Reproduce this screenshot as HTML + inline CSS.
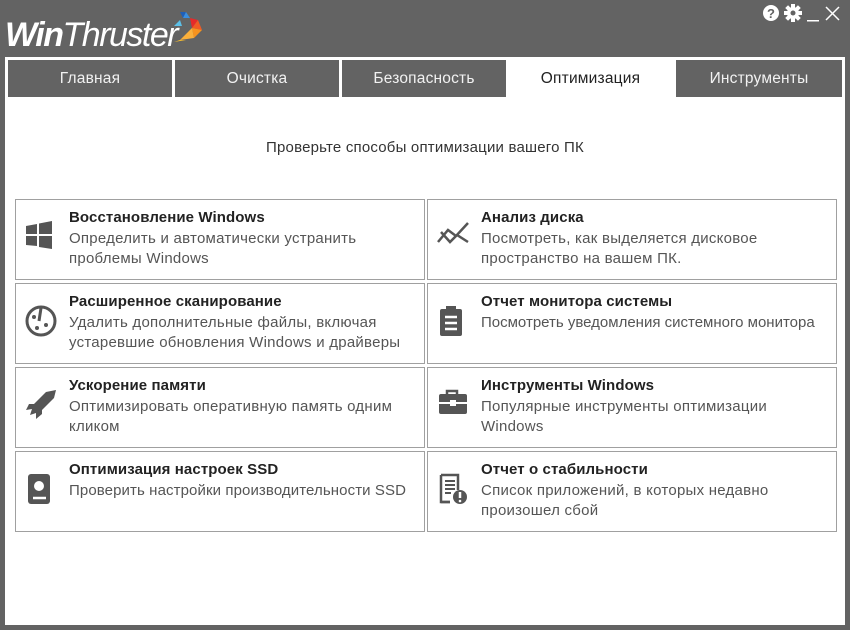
<!DOCTYPE html>
<html><head><meta charset="utf-8"><style>
*{margin:0;padding:0;box-sizing:border-box}
body{width:850px;height:630px;background:#636363;font-family:"Liberation Sans","DejaVu Sans",sans-serif;position:relative;overflow:hidden}
.logo{position:absolute;left:5px;top:16px;color:#fff;font-size:34px;font-style:italic;letter-spacing:-1.5px}
.logo b{font-weight:bold}
.frame{position:absolute;left:5px;top:57px;width:840px;height:568px;background:#fff}
.tab{position:absolute;top:3px;height:37px;background:#636363;color:#f2f2f2;font-size:15.5px;text-align:center;line-height:38px;letter-spacing:0.2px}
.tab.act{background:#fff;color:#222}
.head{position:absolute;top:82px;left:0;width:840px;text-align:center;font-size:15px;color:#333;letter-spacing:0.2px}
.card{position:absolute;width:410px;height:81px;border:1px solid #a0a0a0;background:#fff}
.card .t{position:absolute;left:53px;top:9px;font-size:15px;font-weight:bold;color:#222;letter-spacing:0.1px;white-space:nowrap}
.card .d{position:absolute;left:53px;top:29px;font-size:15px;color:#555;line-height:20px;letter-spacing:0.25px;white-space:nowrap}
.card svg{position:absolute;left:8px;top:20px}
.ctl{position:absolute;top:3px;color:#fff}
</style></head><body>
<div class="logo"><b>Win</b>Thruster</div>
<svg style="position:absolute;left:170px;top:10px" width="36" height="40" viewBox="0 0 36 40">
<polygon points="10,2 16,2 13,8" fill="#1f5fb8"/><polygon points="16,2 20,8 13,8" fill="#3a8ee0"/>
<polygon points="4,16 10,10 12,16" fill="#5cc0e8"/><polygon points="20,8 28,10 22,18" fill="#e52a2a"/>
<polygon points="28,10 32,20 22,18" fill="#f15a24"/><polygon points="22,18 32,20 24,28" fill="#f7931e"/>
<polygon points="10,30 22,18 24,28" fill="#fbb03b"/><polygon points="4,32 10,30 16,30" fill="#fbc02d"/>
</svg>
<div class="ctl" style="left:762px;top:4px"><svg width="80" height="20"><circle cx="9" cy="9" r="8" fill="#fff"/><text x="9" y="14" font-size="13" font-weight="bold" text-anchor="middle" fill="#636363" font-family="Liberation Sans">?</text>
<g transform="translate(31,9)" fill="#fff"><circle r="6"/><rect x="-2" y="-9" width="4" height="18"/><rect x="-9" y="-2" width="18" height="4"/><rect x="-2" y="-9" width="4" height="18" transform="rotate(45)"/><rect x="-2" y="-9" width="4" height="18" transform="rotate(-45)"/><circle r="2.5" fill="#636363"/></g>
<rect x="45" y="16" width="12" height="1.5" fill="#fff"/><path d="M64 3 L77 16 M77 3 L64 16" stroke="#fff" stroke-width="1.5"/></svg></div>
<div class="frame">
<div class="tab" style="left:3px;width:164px">Главная</div>
<div class="tab" style="left:170px;width:164px">Очистка</div>
<div class="tab" style="left:337px;width:164px">Безопасность</div>
<div class="tab act" style="left:503px;width:165px">Оптимизация</div>
<div class="tab" style="left:671px;width:166px">Инструменты</div>
<div class="head">Проверьте способы оптимизации вашего ПК</div>

<div class="card" style="left:10px;top:142px"><svg width="30" height="30"><path d="M2 6 L13 4 L13 14 L2 14Z M15 3.5 L28 1 L28 14 L15 14Z M2 16 L13 16 L13 26 L2 25Z M15 16 L28 16 L28 29 L15 27Z" fill="#555"/></svg><div class="t">Восстановление Windows</div><div class="d">Определить и автоматически устранить<br>проблемы Windows</div></div>
<div class="card" style="left:422px;top:142px"><svg width="34" height="30"><path d="M2 22 L12 10 L20 16 L32 3 M5 12 L14 22 L21 15 L32 22" stroke="#555" stroke-width="2.5" fill="none"/></svg><div class="t">Анализ диска</div><div class="d">Посмотреть, как выделяется дисковое<br>пространство на вашем ПК.</div></div>

<div class="card" style="left:10px;top:226px"><svg width="34" height="34"><circle cx="17" cy="17" r="14" stroke="#555" stroke-width="3" fill="none"/><path d="M17 4 L15 17" stroke="#555" stroke-width="3"/><circle cx="10" cy="13" r="2" fill="#555"/><circle cx="22" cy="21" r="2" fill="#555"/><circle cx="13" cy="24" r="2" fill="#555"/></svg><div class="t">Расширенное сканирование</div><div class="d">Удалить дополнительные файлы, включая<br>устаревшие обновления Windows и драйверы</div></div>
<div class="card" style="left:422px;top:226px"><svg width="30" height="34"><rect x="4" y="5" width="22" height="27" rx="2" fill="#555"/><rect x="10" y="2" width="10" height="6" fill="#555"/><path d="M9 13 H21 M9 19 H21 M9 25 H21" stroke="#fff" stroke-width="2.5"/></svg><div class="t">Отчет монитора системы</div><div class="d" style="letter-spacing:0">Посмотреть уведомления системного монитора</div></div>

<div class="card" style="left:10px;top:310px"><svg width="34" height="34"><path d="M32 2 L22 4 L10 16 L5 16 L2 22 L8 21 L6 27 L12 25 L12 31 L18 26 L18 22 L30 10Z" fill="#555"/></svg><div class="t">Ускорение памяти</div><div class="d">Оптимизировать оперативную память одним<br>кликом</div></div>
<div class="card" style="left:422px;top:310px"><svg width="34" height="30"><path d="M11 6 V3 H21 V6" stroke="#555" stroke-width="2.5" fill="none"/><rect x="3" y="6" width="28" height="20" rx="2" fill="#555"/><path d="M3 15 H31" stroke="#fff" stroke-width="2"/><rect x="14" y="12" width="6" height="6" fill="#fff"/></svg><div class="t">Инструменты Windows</div><div class="d">Популярные инструменты оптимизации<br>Windows</div></div>

<div class="card" style="left:10px;top:394px"><svg width="30" height="34"><rect x="4" y="2" width="22" height="30" rx="3" fill="#555"/><circle cx="15" cy="14" r="5" fill="#fff"/><path d="M9 26 H22" stroke="#fff" stroke-width="2.5"/></svg><div class="t">Оптимизация настроек SSD</div><div class="d" style="letter-spacing:0.1px">Проверить настройки производительности SSD</div></div>
<div class="card" style="left:422px;top:394px"><svg width="34" height="34"><path d="M5 3 H22 V18 M14 30 H5 Z" stroke="#555" stroke-width="2.5" fill="none"/><path d="M5 3 V30 H14" stroke="#555" stroke-width="2.5" fill="none"/><path d="M9 9 H19 M9 13 H19 M9 17 H19 M9 21 H15" stroke="#555" stroke-width="2"/><circle cx="24" cy="25" r="7" fill="#555"/><path d="M24 20 V26" stroke="#fff" stroke-width="2.5"/><circle cx="24" cy="29" r="1.3" fill="#fff"/></svg><div class="t">Отчет о стабильности</div><div class="d">Список приложений, в которых недавно<br>произошел сбой</div></div>
</div>
</body></html>
